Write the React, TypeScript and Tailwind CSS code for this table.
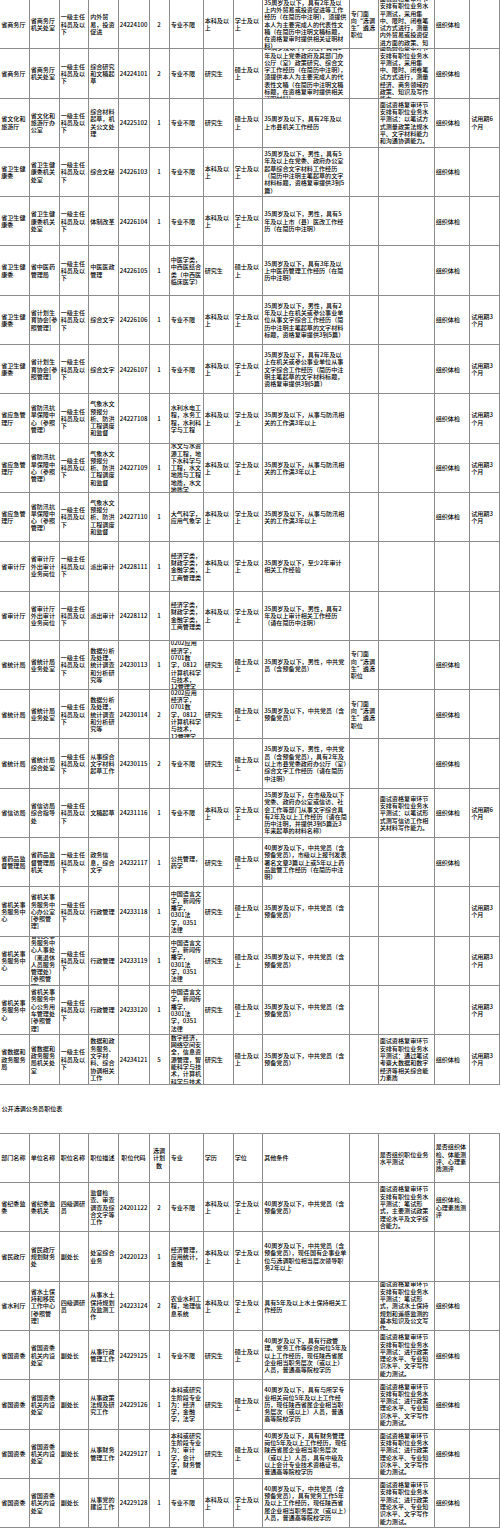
const ROW =
  "grid grid-cols-[29.5px_30px_29.5px_29.5px_31px_20px_34px_30px_29.5px_86.5px_29px_56px_35.5px_30px] h-[49.3px]";

const CELL =
  "flex items-center overflow-hidden border-r border-b border-[#8c8c8c] px-[1.2px] text-[6.1px] leading-[7.3px] font-medium text-black";
const CELL_C =
  "flex items-center justify-center text-center overflow-hidden border-r border-b border-[#8c8c8c] px-[1.2px] text-[6.1px] leading-[7.3px] font-medium text-black";

const Q = "专门面向“选调生”遴选职位";
const T3 = "试用期3个月";
const YJ = "一级主任科员及以下";
const ZYBX = "专业不限";
const BK = "本科及以上";
const XS = "学士及以上";
const YJS = "研究生";
const SS = "硕士及以上";
const TJ = "组织体检";
const FX = "气象水文预报分析、防洪工程调度和监督";
const FXC = "省防汛抗旱保障中心（参照管理）";
const FX3 = "35周岁及以下，从事与防汛相关的工作满3年以上";
const SJZY = "经济学类，财政学类，金融学类，工商管理类";
const TJZY = "0202应用经济学，0701数学，0812计算机科学与技术，12管理学";
const TJMS = "数据分析及处理，统计调查和分析研究等";
const JGZY = "中国语言文学，新闻传播学，0301法学，0351法律";
const DY = "35周岁及以下，中共党员（含预备党员）";
const GZCS = "面试资格复审环节安排有职位业务水平测试：进行政策理论水平、专业知识水平、文字写作能力测试。";
const GZ = "省国资委";
const GZDW = "省国资委机关内设处室";

const rows1: string[][] = [
  ["省商务厅", "省商务厅机关处室", YJ, "内外贸易，投资促进", "24224100", "2", ZYBX, BK, XS,
    "35周岁及以下，具有2年及以上内外贸易或投资促进等工作经历（在简历中注明），须提供本人为主要完成人的代表性文稿（在简历中注明文稿标题，在资格复审时提供相关证明材料）",
    Q, "面试资格复审环节安排有职位业务水平测试，采用集中、限时、闭卷笔试方式进行，测量内外贸易或投资促进方面的政策、知识及写作能力", TJ, ""],
  ["省商务厅", "省商务厅机关处室", YJ, "综合研究和文稿起草", "24224101", "2", ZYBX, YJS, SS,
    "35周岁及以下，男性，具有2年及以上党委政府及其部门办公厅（室）政策研究、综合文字工作经历（在简历中注明），须提供本人为主要完成人的代表性文稿（在简历中注明文稿标题，在资格复审时提供相关证明材料）",
    "", "面试资格复审环节安排有职位业务水平测试，采用集中、限时、闭卷笔试方式进行，测量经济、商务领域的政策、知识及写作能力", TJ, ""],
  ["省文化和旅游厅", "省文化和旅游厅办公室", YJ, "综合材料起草，机关公文处理", "24225102", "1", ZYBX, YJS, SS,
    "35周岁及以下，具有2年及以上市县机关工作经历", "",
    "面试资格复审环节安排有职位业务水平测试：以笔试方式测量政策法规水平、文字材料能力和沟通协调能力。", TJ, "试用期6个月"],
  ["省卫生健康委", "省卫生健康委机关处室", YJ, "综合文秘", "24226103", "1", ZYBX, BK, XS,
    "35周岁及以下，男性，具有5年及以上在党委、政府办公室起草综合文字材料工作经历（简历中注明主笔起草的文字材料标题，资格复审提供3到5篇）", "", "", TJ, ""],
  ["省卫生健康委", "省卫生健康委机关处室", YJ, "体制改革", "24226104", "1", ZYBX, BK, XS,
    "35周岁及以下，男性，具有5年及以上市（县）医改工作经历（在简历中注明）", "", "", TJ, ""],
  ["省卫生健康委", "省中医药管理局", YJ, "中医医政管理", "24226105", "1", "中医学类，中西医结合类（中西医临床医学）", YJS, SS,
    "35周岁及以下，具有3年及以上中医药管理工作经历（在简历中注明）", "", "", TJ, ""],
  ["省卫生健康委", "省计划生育协会[参照管理]", YJ, "综合文字", "24226106", "1", ZYBX, BK, XS,
    "35周岁及以下，男性，具有2年及以上在机关或参公事业单位从事文字综合工作经历（简历中注明主笔起草的文字材料标题，资格复审提供3到5篇）", "", "", TJ, T3],
  ["省卫生健康委", "省计划生育协会[参照管理]", YJ, "综合文字", "24226107", "1", ZYBX, BK, XS,
    "35周岁及以下，具有2年及以上在机关或参公事业单位从事文字综合工作经历（简历中注明主笔起草的文字材料标题，资格复审提供3到5篇）", "", "", TJ, T3],
  ["省应急管理厅", FXC, YJ, FX, "24227108", "1", "水利水电工程，水务工程，水利科学与工程", BK, XS, FX3, "", "", TJ, T3],
  ["省应急管理厅", FXC, YJ, FX, "24227109", "1", "水文与水资源工程，地下水科学与工程，水文地质与工程地质，水文地质学", BK, XS, FX3, "", "", TJ, T3],
  ["省应急管理厅", FXC, YJ, FX, "24227110", "1", "大气科学，应用气象学", BK, XS, FX3, "", "", TJ, T3],
  ["省审计厅", "省审计厅外出审计业务岗位", YJ, "派出审计", "24228111", "1", SJZY, BK, XS,
    "35周岁及以下，至少2年审计相关工作经验", "", "", "", ""],
  ["省审计厅", "省审计厅外出审计业务岗位", YJ, "派出审计", "24228112", "1", SJZY, BK, XS,
    "35周岁及以下，男性，具有2年及以上审计相关工作经历（请在简历中注明）", "", "", "", ""],
  ["省统计局", "省统计局业务处室", YJ, TJMS, "24230113", "1", TJZY, YJS, SS,
    "35周岁及以下，男性，中共党员（含预备党员）", Q, "", TJ, ""],
  ["省统计局", "省统计局业务处室", YJ, TJMS, "24230114", "2", TJZY, YJS, SS, DY, Q, "", TJ, ""],
  ["省统计局", "省统计局综合处室", YJ, "从事综合文字材料起草工作", "24230115", "2", ZYBX, YJS, SS,
    "35周岁及以下，男性，中共党员（含预备党员），具有2年及以上市县党委政府办公厅（室）综合文字工作经历（请在简历中注明）", "", "", TJ, ""],
  ["省信访局", "省信访局综合指导处", YJ, "文稿起草", "24231116", "1", ZYBX, BK, XS,
    "35周岁及以下，在市级及以下党委、政府办公室或信访、社会工作等部门从事文字综合具有2年及以上工作经历（请在简历中注明，并提供3到5篇近3年来起草的材料名称）", "",
    "面试资格复审环节安排有职位业务水平测试：以笔试形式测写信访工作相关材料写作能力。", TJ, "试用期6个月"],
  ["省药品监督管理局", "省药品监督管理局机关", YJ, "政务信息，综合文字", "24232117", "1", "公共管理，药学", YJS, SS,
    "40周岁及以下，中共党员（含预备党员），市级以上报刊发表署名文章3篇以上或5年以上药品监管工作经历（在简历中注明）", "", "", TJ, ""],
  ["省机关事务服务中心", "省机关事务服务中心办公室[参照管理]", YJ, "行政管理", "24233118", "1", JGZY, YJS, SS, DY, "", "", "", T3],
  ["省机关事务服务中心", "省机关事务服务中心人事处（离退休人员服务管理处）[参照管理]", YJ, "行政管理", "24233119", "1", JGZY, YJS, SS, DY, "", "", "", T3],
  ["省机关事务服务中心", "省机关事务服务中心公务用车管理处[参照管理]", YJ, "行政管理", "24233120", "1", JGZY, YJS, SS, DY, "", "", "", T3],
  ["省数据和政务服务局", "省数据和政务服务局机关处室", YJ, "数据和政务服务、文字材料、综合协调相关工作", "24234121", "5",
    "数字经济，网络空间安全，信息资源管理，智能科学与技术，计算机科学与技术", YJS, SS, DY, "",
    "面试资格复审环节安排有职位业务水平测试：通过笔试考察大数据和数字经济等相关综合能力素质", TJ, T3],
];

const header = ["部门名称", "单位名称", "职位名称", "职位描述", "职位代码", "选调计划数", "专业", "学历", "学位", "其他条件", "",
  "是否组织职位业务水平测试", "是否组织体检、体能测评、心理素质测评", ""];

const rows2: string[][] = [
  ["省纪委监委", "省纪委监委机关", "四级调研员", "监督检查、审查调查及综合文字等工作", "24201122", "2", ZYBX, BK, XS,
    "40周岁及以下，中共党员（含预备党员）", "",
    "面试资格复审环节安排有职位业务水平测试：笔试形式，主要测试政策理论水平及文字综合能力。", "组织体检、心理素质测评", ""],
  ["省民政厅", "省民政厅规划财务处", "副处长", "处室综合业务", "24220123", "1", "经济管理，应用统计，金融", BK, XS,
    "40周岁及以下，中共党员（含预备党员），现任国有企事业单位与选调职位相当层次领导职务2年以上", "", "", "", ""],
  ["省水利厅", "省水土保持和移民工作中心[参照管理]", "四级调研员", "从事水土保持规划及监测工作", "24223124", "2", "农业水利工程，地理信息系统", BK, XS,
    "具有5年及以上水土保持相关工作经历", "",
    "面试资格复审环节安排有职位业务水平测试：笔试形式，测试水土保持规划和遥感监测的基本知识及公文写作。", TJ, ""],
  [GZ, GZDW, "副处长", "从事行政管理工作", "24229125", "1", ZYBX, YJS, SS,
    "40周岁及以下，具有行政管理、党务工作等综合岗位5年及以上工作经历，现任陕西省属企业相当职务层次（或以上）人员，普通高等院校学历", "", GZCS, TJ, ""],
  [GZ, GZDW, "副处长", "从事政策法规及研究工作", "24229126", "1", "本科或研究生阶段专业为：经济学，金融学，法学", YJS, SS,
    "40周岁及以下，具有与所学专业相关岗位5年及以上工作经历，现任陕西省属企业相当职务层次（或以上）人员，普通高等院校学历", "", GZCS, TJ, ""],
  [GZ, GZDW, "副处长", "从事财务管理工作", "24229127", "1", "本科或研究生阶段专业为：审计学，会计学，财务管理", YJS, SS,
    "40周岁及以下，具有财务管理岗位5年及以上工作经历，现任陕西省属企业相当职务层次（或以上）人员，具有中级及以上会计专业技术资格证书，普通高等院校学历", "", GZCS, TJ, ""],
  [GZ, GZDW, "副处长", "从事党的建设工作", "24229128", "1", ZYBX, BK, XS,
    "40周岁及以下，中共党员（含预备党员），具有党务工作5年及以上工作经历，现任陕西省属企业相当职务层次（或以上）人员，普通高等院校学历", "", GZCS, TJ, ""],
];

function Row({ cells }: { cells: string[] }) {
  return (
    <div className={ROW}>
      {cells.map((c, i) => (
        <div key={i} className={i === 4 || i === 5 ? CELL_C : CELL}>
          <div className="w-full">{c}</div>
        </div>
      ))}
    </div>
  );
}

export default function App() {
  return (
    <div
      className="w-[500px] h-[1530px] bg-white overflow-hidden"
      style={{ fontFamily: '"Noto Sans CJK SC", "Noto Sans", sans-serif' }}
    >
      {rows1.map((r, i) => (
        <Row key={"a" + i} cells={r} />
      ))}
      <div className="flex items-center h-[49.3px] border-b border-[#8c8c8c] px-[1.5px] text-[6.1px] leading-[7.3px] font-medium text-black">
        公开选调公务员职位表
      </div>
      <Row cells={header} />
      {rows2.map((r, i) => (
        <Row key={"b" + i} cells={r} />
      ))}
    </div>
  );
}
